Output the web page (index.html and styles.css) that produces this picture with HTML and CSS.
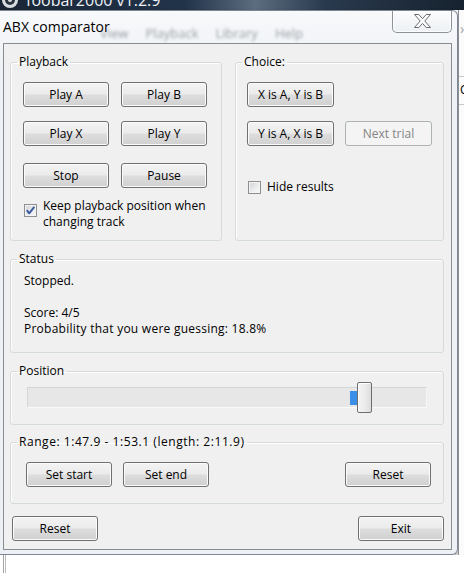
FILE: index.html
```html
<!DOCTYPE html>
<html lang="en">
<head>
<meta charset="utf-8">
<title>ABX comparator</title>
<link rel="stylesheet" href="styles.css">
</head>
<body>
<div class="screen">
  <div class="bg-title">
    <svg class="fb-icon" width="16" height="10" viewBox="0 0 16 10"><circle cx="8" cy="0" r="8" fill="#d9dde2"/><circle cx="8" cy="0" r="5" fill="#2a3340"/><circle cx="8" cy="0" r="2" fill="#d9dde2"/></svg>
    <span class="fb-title">foobar2000 v1.2.9</span>
  </div>
  <div class="mid">
    <div class="dialog">
      <div class="titlebar">
        <div class="ghost-menu"><span>View</span><span>Playback</span><span>Library</span><span>Help</span></div>
        <span class="dlg-title">ABX comparator</span>
        <button class="close" type="button" aria-label="Close">
          <svg width="17" height="14" viewBox="0 0 17 14"><polygon points="0.5,0.5 4.8,0.5 8.5,4.6 12.2,0.5 16.5,0.5 10.8,7 16.5,13.5 12.2,13.5 8.5,9.4 4.8,13.5 0.5,13.5 6.2,7" fill="#fbfbfb" stroke="#6a6e73" stroke-width="1" stroke-linejoin="round"/></svg>
        </button>
      </div>
      <div class="client">
        <div class="top-row">
          <fieldset class="gb gb-playback">
            <legend>Playback</legend>
            <div class="playback-body">
              <div class="btn-grid">
                <button class="btn" type="button">Play A</button>
                <button class="btn" type="button">Play B</button>
                <button class="btn" type="button">Play X</button>
                <button class="btn" type="button">Play Y</button>
                <button class="btn row3" type="button">Stop</button>
                <button class="btn row3" type="button">Pause</button>
              </div>
              <label class="check multi">
                <span class="cb"><svg width="11" height="11" viewBox="0 0 11 11"><path d="M1.8 5.2 L4.2 8.3 L9.3 1.8" fill="none" stroke="#3b5a9d" stroke-width="1.9" stroke-linejoin="round"/></svg></span>
                <span class="check-text">Keep playback position when changing track</span>
              </label>
            </div>
          </fieldset>
          <fieldset class="gb gb-choice">
            <legend>Choice:</legend>
            <div class="choice-body">
              <div class="choice-grid">
                <button class="btn" type="button">X is A, Y is B</button>
                <span></span>
                <button class="btn" type="button">Y is A, X is B</button>
                <button class="btn" type="button" disabled>Next trial</button>
              </div>
              <label class="check single">
                <span class="cb"></span>
                <span class="check-text">Hide results</span>
              </label>
            </div>
          </fieldset>
        </div>
        <fieldset class="gb gb-status">
          <legend>Status</legend>
          <div class="status-body">
            <div class="line">Stopped.</div>
            <div class="line">&nbsp;</div>
            <div class="line">Score: 4/5</div>
            <div class="line wide">Probability that you were guessing: 18.8%</div>
          </div>
        </fieldset>
        <fieldset class="gb gb-position">
          <legend>Position</legend>
          <div class="position-body">
            <div class="slider">
              <div class="track"><span class="sel"></span></div>
              <span class="thumb"></span>
            </div>
          </div>
        </fieldset>
        <fieldset class="gb gb-range">
          <legend class="range-legend">Range: 1:47.9 - 1:53.1 (length: 2:11.9)</legend>
          <div class="range-body">
            <button class="btn" type="button">Set start</button>
            <button class="btn" type="button">Set end</button>
            <button class="btn push-right" type="button">Reset</button>
          </div>
        </fieldset>
        <div class="bottom-row">
          <button class="btn" type="button">Reset</button>
          <button class="btn" type="button">Exit</button>
        </div>
      </div>
    </div>
    <div class="bg-right">
      <span class="bg-chev">&#x203A;</span>
      <span class="bg-line"></span>
      <span class="bg-c">C</span>
      <span class="bg-line second"></span>
    </div>
  </div>
  <div class="bg-below"><span class="bg-rail"></span></div>
</div>
</body>
</html>
```

FILE: styles.css
```css
* { box-sizing: border-box; }
html, body { margin: 0; padding: 0; }
body {
  width: 464px;
  height: 573px;
  overflow: hidden;
  background: #ffffff;
  font-family: "Open Sans", "Noto Sans", sans-serif;
  font-size: 12px;
  color: #000;
}
.screen {
  display: flex;
  flex-direction: column;
  width: 464px;
  height: 573px;
}

/* background foobar2000 window title strip */
.bg-title {
  flex: none;
  height: 10px;
  overflow: hidden;
  display: flex;
  align-items: flex-start;
  gap: 8px;
  padding-left: 2px;
  background: linear-gradient(90deg, #1a2636 0%, #22344a 40%, #5d6d80 55%, #2a3a4e 70%, #16222f 100%);
}
.fb-icon { flex: none; }
.fb-title {
  margin-top: -8px;
  font-size: 16px;
  line-height: 16px;
  color: #eef2f6;
  white-space: nowrap;
}

.mid {
  flex: none;
  height: 545px;
  display: flex;
}

/* the dialog window */
.dialog {
  flex: none;
  width: 458px;
  height: 545px;
  display: flex;
  flex-direction: column;
  border: 1px solid #7e8791;
  border-left: 0;
  border-radius: 0 6px 6px 0;
  background: linear-gradient(#f7f9fb, #eef1f5 60px, #edf0f4);
  box-shadow: 1px 2px 4px rgba(0, 0, 0, 0.35);
}
.titlebar {
  position: relative;
  flex: none;
  height: 32px;
  display: flex;
  align-items: flex-start;
}
.ghost-menu {
  position: absolute;
  left: 100px;
  top: 14px;
  display: flex;
  gap: 17px;
  font-size: 13px;
  line-height: 16px;
  color: #9a9ea4;
  filter: blur(1.4px);
}
.dlg-title {
  position: relative;
  margin-top: 6px;
  padding-left: 3px;
  font-size: 14px;
  line-height: 20px;
  color: #000;
}
.close {
  margin-left: auto;
  margin-right: 5px;
  width: 60px;
  height: 22px;
  padding: 0 0 1px 0;
  display: flex;
  align-items: center;
  justify-content: center;
  border: 1px solid #8d9298;
  border-top: 0;
  border-radius: 0 0 5px 5px;
  background: linear-gradient(rgba(255,255,255,0.5), rgba(232,236,241,0.6));
  box-shadow: inset 0 0 0 1px rgba(255,255,255,0.8);
}

.client {
  flex: none;
  height: 507px;
  margin: 0 5px 0 3px;
  border: 1px solid #878c93;
  background: #f0f0f0;
  padding: 10px 7px 8px 6px;
  display: flex;
  flex-direction: column;
}

/* group boxes */
.gb {
  margin: 0;
  padding: 0;
  min-width: 0;
  border: 1px solid #d5dadd;
  border-radius: 3px;
  box-shadow: inset 1px 1px 0 #ffffff;
}
.gb legend {
  margin-left: 6px;
  padding: 0 2px;
  height: 16px;
  line-height: 16px;
  font-size: 12px;
  white-space: nowrap;
}
.gb legend.range-legend { letter-spacing: 0.55px; }

.top-row {
  flex: none;
  display: flex;
  gap: 13px;
}
.gb-playback { width: 212px; }
.gb-choice { width: 209px; }

.playback-body {
  height: 170px;
  padding: 12px 0 0 12px;
}
.btn-grid {
  display: grid;
  grid-template-columns: 86px 86px;
  grid-auto-rows: 25px;
  column-gap: 12px;
  row-gap: 14px;
}
.btn-grid .row3 { margin-top: 3px; }

.check {
  display: flex;
  align-items: flex-start;
  gap: 6px;
}
.check.multi {
  margin-top: 13px;
  margin-left: 1px;
  width: 190px;
}
.check.multi .cb { margin-top: 6px; }
.check-text { line-height: 16px; }
.cb {
  flex: none;
  width: 13px;
  height: 13px;
  border: 1px solid #8e8f8f;
  background: linear-gradient(135deg, #d0d3d8 0%, #eceef0 60%, #f8f8f8 100%);
  box-shadow: inset 0 0 0 1px #f4f4f4;
  display: flex;
  align-items: center;
  justify-content: center;
}
.cb svg { display: block; }

.choice-body {
  height: 170px;
  padding: 12px 0 0 11px;
}
.choice-grid {
  display: grid;
  grid-template-columns: 87px 87px;
  grid-auto-rows: 25px;
  column-gap: 11px;
  row-gap: 14px;
}
.check.single {
  margin-top: 33px;
  margin-left: 1px;
  align-items: center;
}

/* buttons */
.btn {
  width: 86px;
  height: 25px;
  padding: 0;
  border: 1px solid #707070;
  border-radius: 3px;
  background: linear-gradient(#f3f3f3 0%, #ebebeb 48%, #dddddd 52%, #d0d0d0 100%);
  box-shadow: inset 0 0 0 1px #fbfbfb;
  font-family: inherit;
  font-size: 12px;
  color: #000;
  white-space: nowrap;
}
.choice-grid .btn { width: 87px; }
.btn:disabled {
  border-color: #adb2b5;
  background: #f4f4f4;
  box-shadow: none;
  color: #838383;
}

/* status */
.gb-status { flex: none; margin-top: 10px; }
.status-body {
  height: 85px;
  padding: 6px 0 0 13px;
}
.line { line-height: 16px; height: 16px; white-space: nowrap; }
.line.wide { letter-spacing: 0.25px; }

/* position */
.gb-position { flex: none; margin-top: 10px; }
.position-body {
  height: 45px;
  padding: 3px 16px 0 16px;
}
.slider {
  position: relative;
  height: 31px;
  padding-top: 5px;
}
.track {
  position: relative;
  height: 21px;
  border: 1px solid #d6d6d6;
  border-right-color: #f6f6f6;
  border-bottom-color: #fafafa;
  background: #e7e7e7;
}
.sel {
  position: absolute;
  left: 322px;
  top: 3px;
  width: 7px;
  height: 14px;
  background: #3b8fe8;
}
.thumb {
  position: absolute;
  left: 330px;
  top: 0;
  width: 15px;
  height: 31px;
  border: 1px solid #6e6e6e;
  border-radius: 2px;
  background: linear-gradient(90deg, #f4f4f4 0%, #ececec 50%, #dcdcdc 100%);
  box-shadow: inset 1px 1px 0 #ffffff;
}

/* range */
.gb-range { flex: none; margin-top: 9px; }
.range-body {
  height: 53px;
  padding: 12px 12px 0 15px;
  display: flex;
  gap: 11px;
}
.push-right { margin-left: auto; }

.bottom-row {
  flex: none;
  margin-top: 12px;
  padding-left: 2px;
  display: flex;
  justify-content: space-between;
}

/* background window on the right */
.bg-right {
  flex: 1;
  display: flex;
  flex-direction: column;
  align-items: flex-start;
  border-left: 1px solid #8b9096;
  background: #fbfbfb;
  overflow: hidden;
}
.bg-chev {
  margin-top: 12px;
  margin-left: 1px;
  font-size: 14px;
  line-height: 14px;
  color: #9aa0a6;
}
.bg-line {
  display: block;
  width: 100%;
  height: 1px;
  margin-top: 40px;
  background: #c9c9c9;
}
.bg-c {
  margin-top: 5px;
  margin-left: 1px;
  font-size: 12px;
  line-height: 16px;
}
.bg-line.second { margin-top: 6px; }

.bg-below {
  flex: 1;
  background: #ffffff;
  padding-left: 3px;
}
.bg-rail {
  display: block;
  width: 3px;
  height: 100%;
  border-left: 1px solid #a3a3a3;
  border-right: 1px solid #bdbdbd;
}
```
